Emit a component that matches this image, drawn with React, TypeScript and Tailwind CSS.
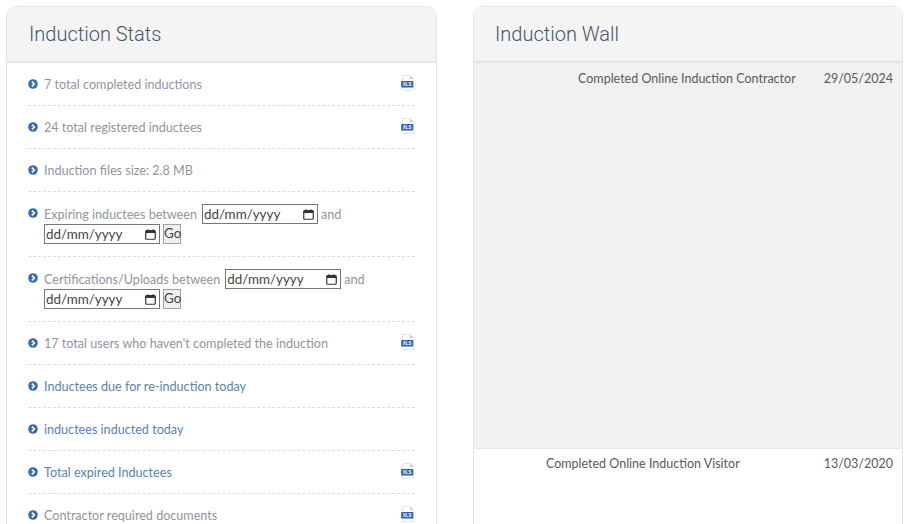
import React from "react";

const body = { fontFamily: '"Lato", "Open Sans", sans-serif' };

function Bullet() {
  return (
    <svg viewBox="0 0 10 10" className="w-[10px] h-[10px] shrink-0 mt-[3px]">
      <circle cx="5" cy="5" r="4.8" fill="#3f6bab" />
      <path d="M3.9 2.6 L6.3 5 L3.9 7.4" fill="none" stroke="#fff" strokeWidth="1.5" />
    </svg>
  );
}

function Xls() {
  return (
    <svg viewBox="0 0 13 16" className="w-[13px] h-[16px] shrink-0 mr-[1px] mt-[-1px]">
      <path d="M1.5 0.5 H9 L12.5 4 V15.5 H1.5 Z" fill="#fff" stroke="#d5dff0" strokeWidth="0.8" />
      <path d="M9 0.5 V4 H12.5 Z" fill="#b9cbe6" />
      <rect x="0.2" y="6" width="12" height="6.5" fill="#2f5fae" />
      <text x="6.2" y="11" textAnchor="middle" fontSize="4.6" fontWeight="700" fill="#fff" fontFamily="Liberation Sans, sans-serif">XLS</text>
    </svg>
  );
}

function DateInput({ className = "" }: { className?: string }) {
  return (
    <div className={`w-[116px] h-[20px] shrink-0 border border-[#767676] bg-white flex items-center justify-between pl-[1px] pr-[3px] text-[13.4px] text-[#444] ${className}`}>
      <span>dd/mm/yyyy</span>
      <svg viewBox="0 0 12 12" className="w-[11px] h-[11px]" fill="none">
        <rect x="0.8" y="1.8" width="10.4" height="9.4" rx="1" stroke="#333" strokeWidth="1.3" />
        <rect x="0.8" y="1.8" width="10.4" height="2.6" fill="#333" />
        <path d="M3.2 0.3 V2 M8.8 0.3 V2" stroke="#333" strokeWidth="1.3" />
      </svg>
    </div>
  );
}

function Row({ text, icon, blue, last }: { text: React.ReactNode; icon?: boolean; blue?: boolean; last?: boolean }) {
  return (
    <li className={`flex items-start gap-[6px] h-[43px] pt-[13px] ${last ? "" : "border-b border-dashed border-[#dddddd]"}`}>
      <Bullet />
      <span className={`flex-1 text-[12.6px] leading-[18px] ${blue ? "text-[#5a82ae]" : "text-[#90959f]"}`}>{text}</span>
      {icon && <Xls />}
    </li>
  );
}

function DateRow({ label }: { label: string }) {
  return (
    <li className="flex items-start gap-[6px] h-[65px] pt-[12px] border-b border-dashed border-[#dddddd]">
      <svg viewBox="0 0 10 10" className="w-[10px] h-[10px] shrink-0 mt-[4px]">
        <circle cx="5" cy="5" r="4.8" fill="#3f6bab" />
        <path d="M3.9 2.6 L6.3 5 L3.9 7.4" fill="none" stroke="#fff" strokeWidth="1.5" />
      </svg>
      <div className="flex-1 text-[12.6px] leading-[20px] text-[#90959f]">
        <div className="flex items-center gap-[3px] h-[20px]">
          <span className="mt-[1px]">{label}</span>
          <DateInput className="ml-[2px]" />
          <span className="mt-[1px]">and</span>
        </div>
        <div className="flex items-center gap-[3px] h-[20px]">
          <DateInput />
          <button className="w-[18px] h-[20px] bg-[#efefef] border border-[#a0a0a0] text-[13.4px] text-[#444] leading-none">Go</button>
        </div>
      </div>
    </li>
  );
}

function Header({ title, className = "" }: { title: string; className?: string }) {
  return (
    <div
      className={`h-[56px] flex items-center bg-[#f4f4f4] border-b-2 border-[#e5e5e5] rounded-t-[10px] text-[20px] font-light text-[#45566a] ${className}`}
      style={{ fontFamily: "Roboto, sans-serif" }}
    >
      {title}
    </div>
  );
}

export default function App() {
  return (
    <div className="h-[524px] w-[911px] overflow-hidden bg-white flex items-start gap-[36px] pl-[6px] pt-[6px]" style={body}>
      <section className="w-[431px] h-[600px] border border-[#e5e5e5] rounded-[10px] shrink-0">
        <Header title="Induction Stats" className="px-[22px]" />
        <ul className="px-[21px]">
          <Row text="7 total completed inductions" icon />
          <Row text="24 total registered inductees" icon />
          <Row text="Induction files size: 2.8 MB" />
          <DateRow label="Expiring inductees between" />
          <DateRow label="Certifications/Uploads between" />
          <Row text="17 total users who haven't completed the induction" icon />
          <Row text="Inductees due for re-induction today" blue />
          <Row text="inductees inducted today" blue />
          <Row text="Total expired Inductees" icon blue />
          <Row text="Contractor required documents" icon last />
        </ul>
      </section>
      <section className="w-[430px] h-[600px] border border-[#e5e5e5] rounded-[10px] shrink-0">
        <Header title="Induction Wall" className="px-[21px]" />
        <div className="text-[12.5px] text-[#5a5a5a]">
          <div className="h-[386px] bg-[#f1f1f1] border-b border-[#e5e5e5] flex justify-end gap-[28px] pr-[9px] pt-[7px] leading-[18px]">
            <span>Completed Online Induction Contractor</span>
            <span>29/05/2024</span>
          </div>
          <div className="flex justify-end gap-[84px] pr-[9px] pt-[6px] leading-[18px]">
            <span>Completed Online Induction Visitor</span>
            <span>13/03/2020</span>
          </div>
        </div>
      </section>
    </div>
  );
}
